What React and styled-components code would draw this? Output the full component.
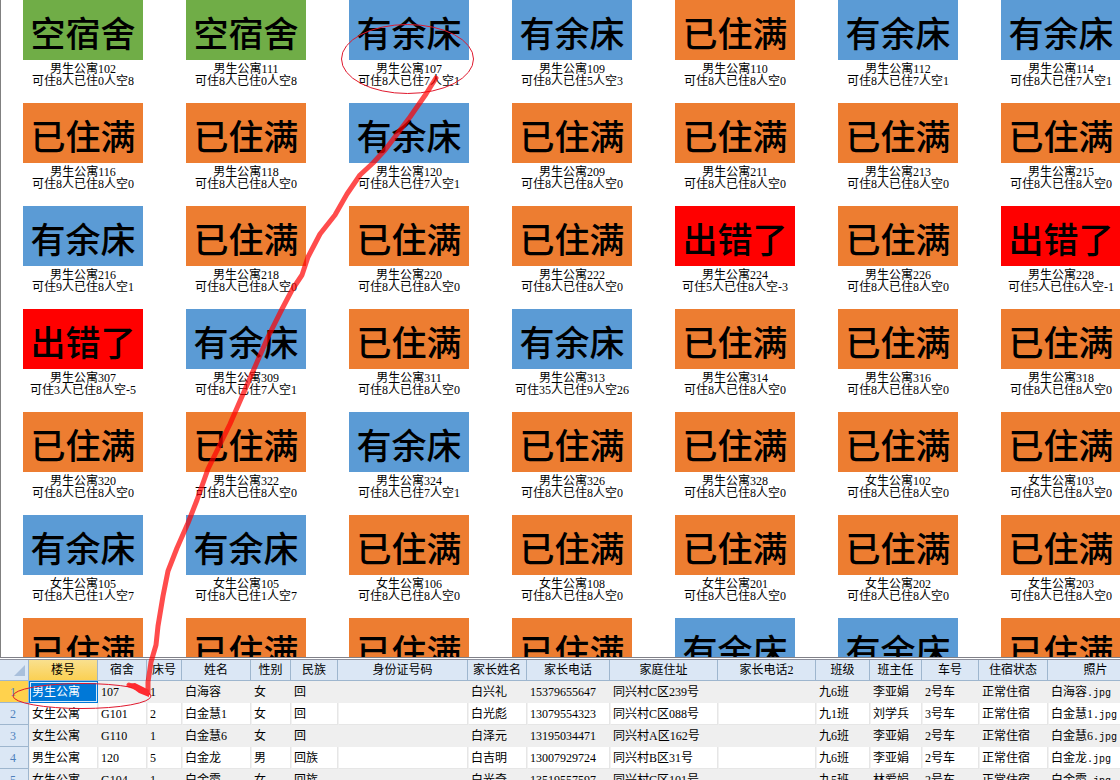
import React from "react";
import styled, { createGlobalStyle } from "styled-components";

const GlobalStyle = createGlobalStyle`
  *, *::before, *::after { box-sizing: border-box; }
  html, body { margin: 0; background: #fff; overflow: hidden; }
  body {
    font-family: "Liberation Serif", "Noto Sans CJK SC", serif;
    font-size: 12px;
    color: #000;
  }
`;

const Page = styled.main`
  position: relative;
  display: flex;
  flex-direction: column;
  height: 100vh;
  overflow: hidden;
`;

const Gallery = styled.section`
  flex: 1;
  min-height: 0;
  overflow: hidden;
  padding-left: 22px;
  border-left: 1px solid #808080;
  display: grid;
  grid-template-columns: repeat(7, 120px);
  grid-auto-rows: 103px;
  column-gap: 43px;
`;

const Card = styled.figure`
  margin: 0;
  text-align: center;
`;

const tileColours = {
  空宿舍: "#70ad47",
  有余床: "#5b9bd5",
  已住满: "#ed7d31",
  出错了: "#ff0000",
};

const Tile = styled.div`
  height: 60px;
  padding-top: 5px;
  background: ${(p) => tileColours[p.$status]};
  font-family: "Noto Sans CJK SC", sans-serif;
  font-size: 35px;
  font-weight: 500;
  line-height: 53px;
`;

const Caption = styled.figcaption`
  padding-top: 3px;
  line-height: 12px;
  white-space: nowrap;
`;

const Line = styled.div``;

const TablePane = styled.section`
  flex: none;
  height: 123px;
  overflow: hidden;
  border-top: 1px solid #808088;
  padding-top: 1px;
`;

const Table = styled.table`
  table-layout: fixed;
  width: 1144px;
  border-collapse: separate;
  border-spacing: 0;
  border-top: 1px solid #8c8f9c;
`;

const Col = styled.col`
  width: ${(p) => p.$w}px;
`;

const HeadCell = styled.th`
  height: 21px;
  padding: 0;
  font-weight: 400;
  line-height: 18px;
  text-align: center;
  white-space: nowrap;
  background: ${(p) => (p.$active ? "linear-gradient(#f9e08e, #fbd053)" : "#dbe7f5")};
  border-right: 1px solid #9eb6ce;
  border-bottom: 1px solid #9eb6ce;
`;

const RowHead = styled(HeadCell)`
  height: 22px;
  padding-right: 2px;
  color: #4f81bd;
  background: ${(p) => (p.$active ? "#ffd24d" : "#dbe7f5")};
`;

const Cell = styled.td`
  height: 22px;
  padding: 0 0 0 2px;
  line-height: 18px;
  white-space: nowrap;
  overflow: hidden;
  background: ${(p) => (p.$shade ? "#efefef" : "#ffffff")};
  border-right: 1px solid ${(p) => (p.$shade ? "#efefef" : "#e6e6e6")};
  border-left: 1px solid ${(p) => (p.$shade ? "#efefef" : "#f2f2f2")};
  border-bottom: 1px solid ${(p) => (p.$shade ? "#efefef" : "#e6e6e6")};
`;

const SelectedCell = styled(Cell)`
  color: #fff;
  background: #0078d7;
  border: 1px solid #0078d7;
  box-shadow: inset 0 0 0 1px #d5e8f8;
`;

const Extension = styled.span`
  font-family: "Liberation Mono", monospace;
  font-size: 10px;
  line-height: 10px;
`;

const Corner = styled.svg`
  display: block;
  margin-left: 14px;
`;

const Annotation = styled.svg`
  position: absolute;
  top: 0;
  left: 0;
  pointer-events: none;
`;

const E = "空宿舍";
const A = "有余床";
const F = "已住满";
const X = "出错了";

const rooms = [
  [E, "男生公寓102", 8, 0, 8], [E, "男生公寓111", 8, 0, 8], [A, "男生公寓107", 8, 7, 1], [A, "男生公寓109", 8, 5, 3], [F, "男生公寓110", 8, 8, 0], [A, "男生公寓112", 8, 7, 1], [A, "男生公寓114", 8, 7, 1],
  [F, "男生公寓116", 8, 8, 0], [F, "男生公寓118", 8, 8, 0], [A, "男生公寓120", 8, 7, 1], [F, "男生公寓209", 8, 8, 0], [F, "男生公寓211", 8, 8, 0], [F, "男生公寓213", 8, 8, 0], [F, "男生公寓215", 8, 8, 0],
  [A, "男生公寓216", 9, 8, 1], [F, "男生公寓218", 8, 8, 0], [F, "男生公寓220", 8, 8, 0], [F, "男生公寓222", 8, 8, 0], [X, "男生公寓224", 5, 8, -3], [F, "男生公寓226", 8, 8, 0], [X, "男生公寓228", 5, 6, -1],
  [X, "男生公寓307", 3, 8, -5], [A, "男生公寓309", 8, 7, 1], [F, "男生公寓311", 8, 8, 0], [A, "男生公寓313", 35, 9, 26], [F, "男生公寓314", 8, 8, 0], [F, "男生公寓316", 8, 8, 0], [F, "男生公寓318", 8, 8, 0],
  [F, "男生公寓320", 8, 8, 0], [F, "男生公寓322", 8, 8, 0], [A, "男生公寓324", 8, 7, 1], [F, "男生公寓326", 8, 8, 0], [F, "男生公寓328", 8, 8, 0], [F, "女生公寓102", 8, 8, 0], [F, "女生公寓103", 8, 8, 0],
  [A, "女生公寓105", 8, 1, 7], [A, "女生公寓105", 8, 1, 7], [F, "女生公寓106", 8, 8, 0], [F, "女生公寓108", 8, 8, 0], [F, "女生公寓201", 8, 8, 0], [F, "女生公寓202", 8, 8, 0], [F, "女生公寓203", 8, 8, 0],
  [F], [F], [F], [F], [A], [A], [F],
];

const columns = [
  ["楼号", 69], ["宿舍", 49], ["床号", 35], ["姓名", 69], ["性别", 40], ["民族", 47],
  ["身份证号码", 130], ["家长姓名", 59], ["家长电话", 83], ["家庭住址", 108], ["家长电话2", 98],
  ["班级", 54], ["班主任", 52], ["车号", 57], ["住宿状态", 69], ["照片", 96],
];

const students = [
  ["男生公寓", "107", "1", "白海容", "女", "回", "", "白兴礼", "15379655647", "同兴村C区239号", "", "九6班", "李亚娟", "2号车", "正常住宿", "白海容"],
  ["女生公寓", "G101", "2", "白金慧1", "女", "回", "", "白光彪", "13079554323", "同兴村C区088号", "", "九1班", "刘学兵", "3号车", "正常住宿", "白金慧1"],
  ["女生公寓", "G110", "1", "白金慧6", "女", "回", "", "白泽元", "13195034471", "同兴村A区162号", "", "九6班", "李亚娟", "2号车", "正常住宿", "白金慧6"],
  ["男生公寓", "120", "5", "白金龙", "男", "回族", "", "白吉明", "13007929724", "同兴村B区31号", "", "九6班", "李亚娟", "2号车", "正常住宿", "白金龙"],
  ["女生公寓", "G104", "1", "白金霞", "女", "回族", "", "白光奇", "13519557597", "同兴村C区101号", "", "九5班", "林爱娟", "2号车", "正常住宿", "白金霞"],
];

function Room({ room }) {
  const [status, name, capacity, taken, free] = room;
  return (
    <Card>
      <Tile $status={status}>{status}</Tile>
      {name && (
        <Caption>
          <Line>{name}</Line>
          <Line>{`可住${capacity}人已住${taken}人空${free}`}</Line>
        </Caption>
      )}
    </Card>
  );
}

function StudentRow({ student, index }) {
  const shade = index % 2 === 0;
  return (
    <tr>
      <RowHead scope="row" $active={index === 0}>{index + 1}</RowHead>
      {student.map((value, i) => {
        const Part = index === 0 && i === 0 ? SelectedCell : Cell;
        return (
          <Part key={i} $shade={shade}>
            {value}
            {i === student.length - 1 && <Extension>.jpg</Extension>}
          </Part>
        );
      })}
    </tr>
  );
}

export default function App() {
  return (
    <>
      <GlobalStyle />
      <Page>
        <Gallery>
          {rooms.map((room, i) => <Room key={i} room={room} />)}
        </Gallery>
        <TablePane>
          <Table>
            <colgroup>
              <Col $w={29} />
              {columns.map(([label, w]) => <Col key={label} $w={w} />)}
            </colgroup>
            <thead>
              <tr>
                <HeadCell aria-label="全选">
                  <Corner width="11" height="11" viewBox="0 0 11 11" aria-hidden="true">
                    <path d="M11 0V11H0Z" fill="#a9c0dc" />
                  </Corner>
                </HeadCell>
                {columns.map(([label], i) => (
                  <HeadCell key={label} scope="col" $active={i === 0}>{label}</HeadCell>
                ))}
              </tr>
            </thead>
            <tbody>
              {students.map((s, i) => <StudentRow key={i} student={s} index={i} />)}
            </tbody>
          </Table>
        </TablePane>
        <Annotation width="480" height="720" viewBox="0 0 480 720" fill="none" aria-hidden="true">
          <ellipse cx="407.5" cy="59" rx="66" ry="34.5" stroke="#e0182d" strokeWidth="1" />
          <ellipse cx="82" cy="696" rx="69" ry="12.5" stroke="#e0182d" strokeWidth="1" />
          <path
            d="M436 78L426 94L410 117L385 150L373 163L360 175L347 194L335 215L320 234L308 257L302 275L292 290L282 309L268 337L247 385L230 424L208 469L197 500L188 523L177 548L168 571L163 596L158 626L156 645L151 662L148 682L148 693L137 688L129 685"
            stroke="#ff0000"
            strokeOpacity="0.7"
            strokeWidth="5"
            strokeLinecap="round"
            strokeLinejoin="round"
          />
          <path d="M127 684L135 683L149 690L149 697L139 693Z" fill="#ff2a30" />
        </Annotation>
      </Page>
    </>
  );
}
